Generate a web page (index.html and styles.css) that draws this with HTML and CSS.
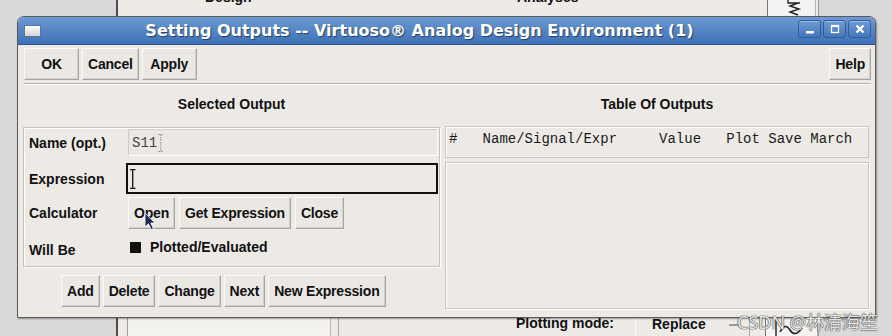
FILE: index.html
```html
<!DOCTYPE html>
<html lang="en">

<head>
    <meta charset="UTF-8">
    <title>Setting Outputs</title>
    <link rel="stylesheet" href="styles.css">
</head>

<body>
    <div class="desk">

        <!-- window behind the dialog -->
        <div class="backwin">
            <span class="bw-text bw-design">Design</span>
            <span class="bw-text bw-analyses">Analyses</span>
            <div class="bw-iconbox bw-iconbox-top">
                <svg width="47" height="36" viewBox="0 0 47 36">
                    <path d="M20 20 V23 H32 M30 23 L22 26 L31 29 L22 32 L30 35" fill="none" stroke="#222" stroke-width="1.4" />
                </svg>
            </div>
            <div class="bw-panel"></div>
            <div class="bw-divider"></div>
            <span class="bw-text bw-plotmode">Plotting mode:</span>
            <div class="bw-replace">Replace<span class="bw-dash"></span></div>
            <div class="bw-iconbox bw-iconbox-bottom">
                <svg width="51" height="20" viewBox="0 0 51 20">
                    <path d="M10 20 V3 M7.5 7 L10 3 L12.5 7" fill="none" stroke="#222" stroke-width="1.4" />
                    <path d="M14 16 Q19 6 24 14 T36 12" fill="none" stroke="#222" stroke-width="1.6" />
                </svg>
            </div>
        </div>

        <!-- the dialog -->
        <div class="dialog">
            <div class="titlebar">
                <span class="win-icon"></span>
                <span class="title">Setting Outputs -- Virtuoso® Analog Design Environment (1)</span>
                <div class="win-buttons">
                    <span class="wbtn">
                        <svg width="12" height="12" viewBox="0 0 12 12"><rect x="2" y="8" width="8" height="2.5" fill="#fff" /></svg>
                    </span>
                    <span class="wbtn">
                        <svg width="12" height="12" viewBox="0 0 12 12"><rect x="2.5" y="2.5" width="7" height="7" fill="none" stroke="#fff" stroke-width="1.3" /><rect x="2" y="2" width="8" height="2" fill="#fff" /></svg>
                    </span>
                    <span class="wbtn">
                        <svg width="12" height="12" viewBox="0 0 12 12"><path d="M2.5 2.5 L9.5 9.5 M9.5 2.5 L2.5 9.5" stroke="#fff" stroke-width="2.2" /></svg>
                    </span>
                </div>
            </div>

            <div class="content">
                <div class="toolbar">
                    <button class="btn">OK</button>
                    <button class="btn">Cancel</button>
                    <button class="btn">Apply</button>
                    <button class="btn help">Help</button>
                </div>
                <div class="separator"></div>

                <div class="columns">
                    <div class="col-left">
                        <div class="col-title">Selected Output</div>
                        <div class="frame">
                            <div class="row">
                                <span class="row-label">Name (opt.)</span>
                                <div class="field">S11<svg class="ibeam-grey" width="6" height="18" viewBox="0 0 6 18"><path d="M0.5 0.5 H5 M2.8 0.5 V17.5 M0.5 17.5 H5" fill="none" stroke="#888" stroke-width="1" stroke-dasharray="1.5 1" /></svg></div>
                            </div>
                            <div class="row row-expr">
                                <span class="row-label">Expression</span>
                                <div class="field focus"><svg width="6" height="20" viewBox="0 0 6 20"><path d="M0 0.7 H5.5 M2.7 0.7 V19.3 M0 19.3 H5.5" fill="none" stroke="#111" stroke-width="1.3" /></svg></div>
                            </div>
                            <div class="row row-calc">
                                <span class="row-label">Calculator</span>
                                <div class="calc-buttons">
                                    <button class="btn">Open</button>
                                    <button class="btn">Get Expression</button>
                                    <button class="btn">Close</button>
                                </div>
                            </div>
                            <div class="row row-will">
                                <span class="row-label will">Will Be</span>
                                <span class="check-square"></span>
                                <span class="will-text">Plotted/Evaluated</span>
                            </div>
                        </div>
                        <div class="actions">
                            <button class="btn">Add</button>
                            <button class="btn">Delete</button>
                            <button class="btn">Change</button>
                            <button class="btn">Next</button>
                            <button class="btn">New Expression</button>
                        </div>
                    </div>

                    <div class="col-right">
                        <div class="col-title">Table Of Outputs</div>
                        <div class="table-head">#   Name/Signal/Expr     Value   Plot Save March</div>
                        <div class="table-body"></div>
                    </div>
                </div>
            </div>
        </div>

        <svg class="pointer" width="14" height="20" viewBox="0 0 14 20">
            <path d="M1 1 L1 15 L4.5 11.8 L7.2 17.5 L9.4 16.5 L6.8 11 L11.2 11 Z" fill="#1f2d52" stroke="#fff" stroke-width="0.8" />
        </svg>
        <div class="watermark">CSDN @林清海笙</div>
    </div>
</body>

</html>
```

FILE: styles.css
```css
* {
    box-sizing: border-box;
}

body {
    margin: 0;
    width: 892px;
    height: 336px;
    overflow: hidden;
    background: #d9d9d9;
    font-family: "Liberation Sans", Arial, sans-serif;
    font-weight: bold;
    font-size: 14px;
    color: #111;
}

.desk {
    position: relative;
    width: 892px;
    height: 336px;
    overflow: hidden;
}

/* ---- window in the background ---- */
.backwin {
    position: absolute;
    left: 116px;
    top: -20px;
    width: 703px;
    height: 356px;
    background: #eeebe7;
    border-left: 2px solid #4d4d4d;
    border-right: 1px solid #9a9a9a;
}

.bw-text {
    position: absolute;
    line-height: 16px;
}

.bw-design {
    left: 87px;
    top: 9px;
}

.bw-analyses {
    left: 399px;
    top: 9px;
}

.bw-iconbox {
    position: absolute;
    background: #f4f3f1;
    border-left: 1px solid #777;
    border-right: 1px solid #b5b5b5;
}

.bw-iconbox-top {
    left: 649px;
    top: 0;
    width: 49px;
    height: 36px;
}

.bw-iconbox-bottom {
    left: 647px;
    top: 336px;
    width: 53px;
    height: 20px;
}

.bw-panel {
    position: absolute;
    left: 9px;
    top: 330px;
    width: 204px;
    height: 26px;
    background: #f4f2ef;
    border-left: 1px solid #9d9d9d;
    border-right: 1px solid #b8b8b8;
}

.bw-divider {
    position: absolute;
    left: 220px;
    top: 330px;
    width: 1px;
    height: 26px;
    background: #a8a8a8;
}

.bw-plotmode {
    left: 398px;
    top: 335px;
}

.bw-replace {
    position: absolute;
    left: 517px;
    top: 334px;
    width: 115px;
    height: 22px;
    padding: 1px 0 0 16px;
    line-height: 16px;
    border: 1px solid;
    border-color: #fafafa #aaa #aaa #fafafa;
    border-bottom: none;
}

.bw-dash {
    position: absolute;
    right: 10px;
    top: 9px;
    width: 10px;
    height: 2px;
    background: #9a9a9a;
}

/* ---- dialog ---- */
.dialog {
    position: absolute;
    left: 17px;
    top: 16px;
    width: 859px;
    height: 302px;
    background: #edeae6;
    border: 1px solid #5a5a5a;
    border-radius: 7px 7px 0 0;
    box-shadow: 1px 1px 2px rgba(0, 0, 0, 0.35);
    display: flex;
    flex-direction: column;
}

.titlebar {
    height: 28px;
    display: flex;
    align-items: center;
    padding: 0 4px 0 6px;
    background: linear-gradient(#6d9ad3, #3d70b5);
    border-radius: 6px 6px 0 0;
    border-bottom: 1px solid #2d5690;
}

.win-icon {
    width: 17px;
    height: 12px;
    background: linear-gradient(#fbfbfb, #d6d6d6);
    border: 1px solid #5f7392;
    border-radius: 1px;
}

.title {
    flex: 1;
    text-align: center;
    color: #fff;
    font-family: "DejaVu Sans", sans-serif;
    font-size: 16px;
    font-weight: bold;
    text-shadow: 1px 1px 1px rgba(0, 0, 0, 0.5);
}

.win-buttons {
    display: flex;
    gap: 2px;
    margin-bottom: 3px;
}

.wbtn {
    width: 23px;
    height: 18px;
    border: 1px solid #2e5c9c;
    border-radius: 3px;
    background: linear-gradient(#6f9cd5, #4576ba);
    box-shadow: inset 0 1px 0 rgba(255, 255, 255, 0.35);
    display: flex;
    align-items: center;
    justify-content: center;
}

.content {
    flex: 1;
    padding: 3px 4px 0 6px;
    display: flex;
    flex-direction: column;
}

.btn {
    font: inherit;
    color: #111;
    height: 32px;
    padding: 0 5px;
    background: #ebe8e4;
    border: 1px solid;
    border-color: #fbfaf9 #a9a6a1 #a9a6a1 #fbfaf9;
    box-shadow: inset -1px -1px 0 #d2cfca;
    letter-spacing: -0.2px;
}

.toolbar {
    display: flex;
    gap: 3px;
    height: 32px;
}

.toolbar .btn {
    min-width: 55px;
}

.toolbar .help {
    margin-left: auto;
    min-width: 38px;
}

.separator {
    margin-top: 3px;
    height: 2px;
    border-top: 1px solid #b6b3ae;
    border-bottom: 1px solid #fff;
}

.columns {
    display: flex;
    gap: 5px;
    margin-left: -1px;
}

.col-left {
    width: 417px;
}

.col-right {
    width: 424px;
}

.col-title {
    margin-top: 11px;
    line-height: 17px;
    text-align: center;
}

.frame {
    margin-top: 14px;
    border: 1px solid #c6c3be;
    box-shadow: inset 1px 1px 0 #fff, 1px 1px 0 #fff;
    padding: 1px 1px 8px 5px;
    display: flex;
    flex-direction: column;
}

.row {
    display: flex;
    align-items: center;
}

.row-label {
    width: 99px;
    flex: none;
}

.field {
    width: 310px;
    height: 27px;
    display: flex;
    align-items: center;
    padding-left: 3px;
    background: #ebe8e4;
    border: 1px solid;
    border-color: #cfccc7 #fdfdfd #fdfdfd #cfccc7;
    font-family: "Liberation Mono", monospace;
    font-weight: normal;
    font-size: 14px;
    color: #444;
}

.ibeam-grey {
    margin-left: 1px;
}

.row-expr {
    margin-top: 7px;
}

.field.focus {
    width: 314px;
    height: 31px;
    margin-left: -2px;
    padding-left: 2px;
    border: 2px solid #111;
    background: #edeae6;
}

.row-calc {
    margin-top: 3px;
}

.calc-buttons {
    display: flex;
    gap: 4px;
}

.row-will {
    margin-top: 9px;
    height: 20px;
}

.row-label.will {
    padding-top: 4px;
}

.check-square {
    width: 11px;
    height: 11px;
    background: #111;
    margin: 0 9px 2px 2px;
}

.will-text {
    padding-bottom: 2px;
}

.actions {
    margin-top: 8px;
    display: flex;
    gap: 3px;
    padding-left: 38px;
}

.table-head {
    margin-top: 13px;
    height: 32px;
    padding: 3px 0 0 3px;
    border: 1px solid #c8c5c0;
    box-shadow: inset 1px 1px 0 #fff;
    font-family: "Liberation Mono", monospace;
    font-weight: normal;
    font-size: 14px;
    line-height: 18px;
    white-space: pre;
    color: #1a1a1a;
}

.table-body {
    margin-top: 4px;
    height: 147px;
    border: 1px solid #c8c5c0;
    box-shadow: inset 1px 1px 0 #fff, 1px 1px 0 #fff;
}

/* ---- overlays ---- */
.pointer {
    position: absolute;
    left: 144px;
    top: 212px;
}

.watermark {
    position: absolute;
    left: 737px;
    top: 310px;
    font-family: "Noto Sans", "Noto Sans CJK SC", sans-serif;
    font-weight: normal;
    font-size: 18px;
    line-height: 24px;
    color: rgba(250, 250, 250, 0.9);
    text-shadow: 0 0 1px #444, 0 0 1px #444, 0 0 1px #444;
}
```
